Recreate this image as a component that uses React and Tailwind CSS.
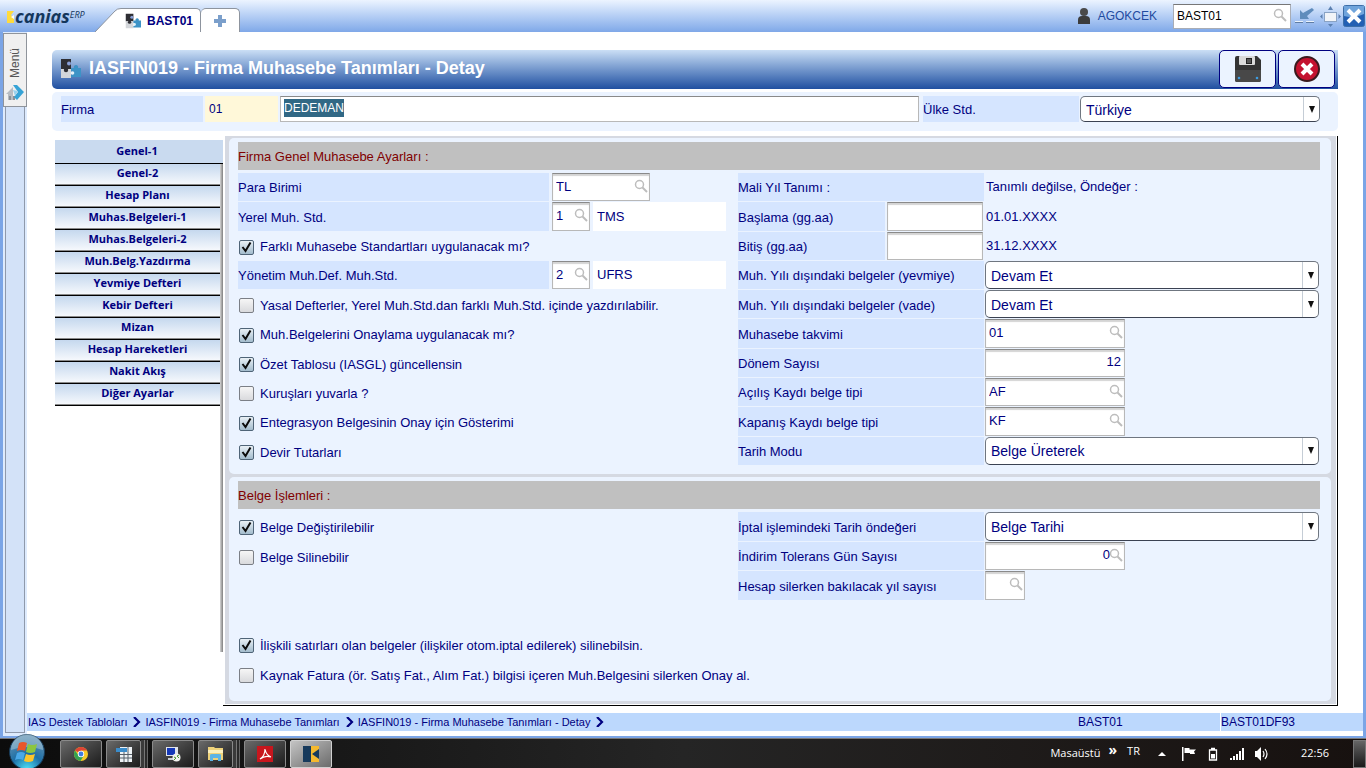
import React, { useEffect, useRef } from "react";

const tabs = [
  "Genel-1",
  "Genel-2",
  "Hesap Planı",
  "Muhas.Belgeleri-1",
  "Muhas.Belgeleri-2",
  "Muh.Belg.Yazdırma",
  "Yevmiye Defteri",
  "Kebir Defteri",
  "Mizan",
  "Hesap Hareketleri",
  "Nakit Akış",
  "Diğer Ayarlar",
];

const crumbs = [
  "IAS Destek Tabloları",
  "IASFIN019 - Firma Muhasebe Tanımları",
  "IASFIN019 - Firma Muhasebe Tanımları - Detay",
];

function SearchIcon() {
  return (
    <svg viewBox="0 0 14 14" className="h-3.5 w-3.5" fill="none" stroke="#bdbdbd">
      <circle cx="5.5" cy="5.5" r="4" strokeWidth="1.5" />
      <path d="M8.5 8.5 L13 13" strokeWidth="2" />
    </svg>
  );
}

function PuzzleIcon({ className }) {
  return (
    <svg viewBox="0 0 21 21" className={className}>
      <path d="M1 1h10v10H1z" fill="#2e2e33" />
      <path d="M1 11h10v9H1z" fill="#d3d6da" />
      <circle cx="9" cy="5.500" r="2" fill="#8aa0d8" />
      <circle cx="6" cy="12" r="2.200" fill="#2e2e33" />
      <path d="M11 10h3a2.200 2.200 0 1 1 4 0h3v9H11v-2a2 2 0 1 0 0-4z" fill="#3d93c6" />
      <circle cx="12.500" cy="15" r="1.800" fill="#e2f1f9" />
    </svg>
  );
}

function Label({ children, htmlFor, className = "" }) {
  return (
    <label
      htmlFor={htmlFor}
      className={`flex items-center self-stretch bg-[#d5e5ff] pt-0.5 ${className}`}
    >
      {children}
    </label>
  );
}

function Field({ id, name, value = "", search, right, className = "" }) {
  return (
    <div className={`relative self-stretch ${className}`}>
      <input
        id={id}
        aria-label={name}
        defaultValue={value}
        className={`h-full w-full border border-[#b8b8b8] border-t-[#8a8a8a] bg-white px-[3px] pb-0.5 text-[13px] text-[#000080] shadow-[inset_0_2px_1px_#d4d4d4] outline-none ${
          right ? "text-right" : ""
        } ${right && search ? "pr-3.5" : ""}`}
      />
      {search && (
        <button aria-label="Ara" className="absolute top-1.5 right-0.5">
          <SearchIcon />
        </button>
      )}
    </div>
  );
}

function Select({ id, value, className = "" }) {
  return (
    <div className={`relative self-stretch ${className}`}>
      <select
        id={id}
        className="h-full w-full appearance-none rounded-[5px] border border-[#6f7680] border-b-[#3b4252] bg-white px-[5px] pt-0.5 text-[14px] text-[#000080] outline-none"
      >
        <option>{value}</option>
      </select>
      <span className="pointer-events-none absolute inset-y-px right-px flex w-4 items-center justify-center border-l border-[#c5cdd6]">
        <svg viewBox="0 0 6 7" className="h-[7px] w-1.5">
          <path d="M0 0h6L3 7z" fill="#111" />
        </svg>
      </span>
    </div>
  );
}

function Check({ children, checked }) {
  return (
    <label className="flex items-center gap-[5px] pt-[3px] pl-px">
      <span className="relative h-[15px] w-[15px]">
        <input
          type="checkbox"
          defaultChecked={checked}
          className="peer block h-[15px] w-[15px] appearance-none rounded-[2px] border border-[#7b7f86] bg-linear-to-b from-[#f6f6f6] to-[#d9dadd] checked:border-[#4f6477] checked:from-[#e9f0f5] checked:to-[#a3bccd]"
        />
        <svg
          viewBox="0 0 15 15"
          className="pointer-events-none absolute inset-0 hidden peer-checked:block"
        >
          <path d="M3.5 7 L6.5 11 L11.5 2.5" fill="none" stroke="#0b0b0b" strokeWidth="2" />
        </svg>
      </span>
      <span className="pl-px">{children}</span>
    </label>
  );
}

function Section({ title, children, className }) {
  return (
    <section
      className={`flex flex-col rounded-[5px] bg-[#ebf3ff] pt-1 pr-[11px] pl-[9px] ${className}`}
    >
      <h2 className="flex h-7 items-center bg-[#c0c0c0] pt-0.5 text-[#800000]">{title}</h2>
      {children}
    </section>
  );
}

function TopBar() {
  return (
    <header className="flex h-8 items-end bg-linear-to-b from-[#ecf4ff] to-[#7fa8e8]">
      <div className="flex h-8 w-[95px] items-start pt-1 pl-[7px]">
        <svg viewBox="0 0 7 12" className="mt-[7px] mr-px h-3 w-[7px]">
          <path d="M0 0h7L4 4l3 4v4H0z" fill="#ffdb3d" />
          <path d="M7 4v4L4 6z" fill="#fff" />
        </svg>
        <span className="font-['Open_Sans',sans-serif] text-[18px] leading-6 font-bold text-[#14365c] italic">
          canias
        </span>
        <span className="mt-1 font-['Open_Sans',sans-serif] text-[9px] text-[#14365c] italic">
          ERP
        </span>
      </div>
      <nav className="flex h-6 items-stretch">
        <svg viewBox="0 0 26 24" className="h-6 w-[26px]">
          <path d="M0 24 L20 3 Q22 .5 26 .5 V24z" fill="#fff" />
          <path d="M0 24 L20 3 Q22 .5 26 .5" fill="none" stroke="#8d949e" />
        </svg>
        <a
          href="#bast01"
          className="flex items-center gap-1.5 rounded-tr-[5px] border-t border-r border-[#8d949e] bg-white pr-[7px] pl-1 text-[12px] font-bold text-[#000080]"
        >
          <PuzzleIcon className="h-4 w-4" />
          BAST01
        </a>
        <button
          aria-label="Yeni sekme"
          className="flex w-[39px] items-center justify-center rounded-t-[5px] border-t border-r border-[#8d949e] bg-white"
        >
          <svg viewBox="0 0 12 12" className="h-3 w-3">
            <path d="M4 0h4v4h4v4H8v4H4V8H0V4h4z" fill="#7b9fcb" />
          </svg>
        </button>
      </nav>
      <div className="ml-auto flex h-8 items-center">
        <svg viewBox="0 0 14 16" className="mr-[7px] h-4 w-3.5">
          <circle cx="7" cy="4" r="4" fill="#4a4a4a" />
          <path d="M1 16v-4q0-4 4-4h4q4 0 4 4v4z" fill="#3c3c3c" />
        </svg>
        <span className="mr-4 text-[12px] text-[#1f4aa0]">AGOKCEK</span>
        <div className="relative mr-1 h-[25px] w-[118px]">
          <input
            aria-label="Uygulama"
            defaultValue="BAST01"
            className="h-full w-full border border-[#a9adb5] border-t-[#777] bg-white px-[3px] text-[12px] text-black outline-none"
          />
          <button aria-label="Ara" className="absolute top-1 right-1">
            <SearchIcon />
          </button>
        </div>
        <button aria-label="Küçült" className="mr-1.5">
          <svg viewBox="0 0 19 16" className="h-4 w-[19px]">
            <path d="M17 0 L19 2 L12 8 L14 11 H5V2l3 3z" fill="#5f8cbc" />
            <path d="M0 13.500h8M11 13.500h8" stroke="#e9f1fa" />
            <path d="M0 14.500h8M11 14.500h8" stroke="#5f7da5" />
          </svg>
        </button>
        <button aria-label="Tam ekran" className="mr-0.5">
          <svg viewBox="0 0 21 21" className="h-[21px] w-[21px]">
            <rect x="4.500" y="6.500" width="12" height="9" fill="#f1f4f8" stroke="#8aa3c4" />
            <path
              d="M8 4h5l-2.500-4zM8 18h5l-2.500 3zM2.500 8v5L0 10.500zM18.500 8v5l2.500-2.500z"
              fill="#5c80b0"
            />
          </svg>
        </button>
        <button aria-label="Kapat" className="mr-px">
          <svg viewBox="0 0 22 22" className="h-[22px] w-[22px]">
            <rect x=".5" y=".5" width="21" height="21" rx="2" fill="#2360b4" stroke="#3c6ea8" />
            <path d="M1 1h20v8q-10 5-20 2z" fill="#6fa4dc" />
            <path d="M5 5l12 12M17 5L5 17" stroke="#fff" strokeWidth="4" />
          </svg>
        </button>
      </div>
    </header>
  );
}

function MenuRail() {
  return (
    <aside className="flex w-6 shrink-0 flex-col bg-[#deebfd] pb-[3px]">
      <button className="mt-px flex h-[74px] flex-col items-center justify-between border border-[#8f949b] bg-[#f0f0f0] pt-3.5 pb-1 text-[12px] text-[#555]">
        <span className="rotate-180 leading-4 [writing-mode:vertical-rl]">Menü</span>
        <svg viewBox="0 0 18 17" className="h-[17px] w-[18px]">
          <path d="M0 9 L7 2v13H2V9z" fill="#b7bcc2" />
          <path d="M3 11h2v4H3zM7 11h2v4H7z" fill="#8b9097" />
          <path d="M7 0l4 0 7 7-7 8-3-3 4-5z" fill="#36a3d6" />
          <path d="M7 5l5 1-3 5z" fill="#9ad2ee" />
        </svg>
      </button>
      <div className="mr-0.5 ml-0.5 flex-1 border border-t-0 border-[#8f99ab] bg-[#d3e2f8]" />
    </aside>
  );
}

function TitleBar() {
  return (
    <div className="flex h-[39px] items-start rounded-l-[5px] bg-linear-to-b from-[#cbdff5] to-[#1f4fa0] pr-[3px]">
      <PuzzleIcon className="mt-2 ml-2 h-[21px] w-[21px]" />
      <h1 className="mt-1 ml-2 text-[18px] leading-7 font-bold text-white">
        IASFIN019 - Firma Muhasebe Tanımları - Detay
      </h1>
      <div className="ml-auto flex gap-0.5">
        <button
          aria-label="Kaydet"
          className="flex h-[38px] w-[57px] items-center justify-center rounded-[5px] border border-[#000080] bg-[#ebf3ff]"
        >
          <svg viewBox="0 0 26 26" className="h-[26px] w-[26px]">
            <path d="M2 0h20l4 4v20q0 2-2 2H2q-2 0-2-2V2q0-2 2-2z" fill="#333" />
            <path d="M0 14h26v10q0 2-2 2H2q-2 0-2-2z" fill="#484848" />
            <rect x="4" y="0" width="16" height="9" rx="1" fill="#d9d9d9" />
            <rect x="11.500" y="2.500" width="5" height="5" fill="#555" stroke="#222" />
            <circle cx="4" cy="22" r="1.300" fill="#3d9be0" />
            <circle cx="22" cy="22" r="1.300" fill="#3d9be0" />
          </svg>
        </button>
        <button
          aria-label="Vazgeç"
          className="flex h-[38px] w-[57px] items-center justify-center rounded-[5px] border border-[#000080] bg-[#ebf3ff]"
        >
          <svg viewBox="0 0 26 26" className="h-[26px] w-[26px]">
            <circle cx="13" cy="13" r="12" fill="#c4122f" stroke="#3a1a1e" strokeWidth="2" />
            <path d="M8 8l10 10M18 8L8 18" stroke="#fff" strokeWidth="4" />
          </svg>
        </button>
      </div>
    </div>
  );
}

function CompanyBar() {
  const nameRef = useRef(null);
  useEffect(() => {
    nameRef.current.focus();
    nameRef.current.select();
  }, []);
  return (
    <div className="mt-[3px] flex h-[39px] rounded-[5px] bg-[#ebf3ff] pt-1 pr-[18px] pb-[9px] pl-[9px]">
      <Label htmlFor="company" className="mr-0.5 w-[142px]">
        Firma
      </Label>
      <input
        id="company"
        defaultValue="01"
        className="mr-0.5 w-[73px] bg-[#fff8d9] px-1 text-[12px] text-[#000080] outline-none"
      />
      <input
        ref={nameRef}
        aria-label="Firma adı"
        defaultValue="DEDEMAN"
        className="mr-1 min-w-0 flex-1 border border-[#b8b8b8] border-t-[#8a8a8a] bg-white px-[3px] pb-0.5 text-[12px] text-[#000080] outline-none selection:bg-[#316885] selection:text-white"
      />
      <Label htmlFor="country" className="mr-px w-[156px]">
        Ülke Std.
      </Label>
      <Select id="country" value="Türkiye" className="w-60" />
    </div>
  );
}

function SideTabs() {
  return (
    <nav className="mt-1 ml-[3px] flex w-[168px] shrink-0 flex-col font-['Open_Sans',sans-serif] text-[11px] font-bold text-[#000080]">
      <button className="h-6 border-b border-black bg-[#c9daef] pr-1">{tabs[0]}</button>
      <div className="mb-[54px] flex flex-1">
        <div className="flex flex-1 flex-col">
          {tabs.slice(1).map((tab) => (
            <button
              key={tab}
              className="h-[22px] border-b border-black bg-linear-to-b from-[#c5d8ee] to-[#f8fafd] pb-0.5 shadow-[inset_0_-1px_0_#8a8a8a]"
            >
              {tab}
            </button>
          ))}
        </div>
        <div className="w-[3px] bg-linear-to-r from-[#d6d6d6] to-[#808080]" />
      </div>
    </nav>
  );
}

function GeneralSection() {
  return (
    <Section title="Firma Genel Muhasebe Ayarları :" className="h-[336px]">
      <div className="mt-[3px] mb-[9px] flex flex-1">
        <div className="grid w-[500px] shrink-0 grid-rows-10 gap-px">
          <div className="flex items-center">
            <Label htmlFor="currency" className="mr-[3px] w-[311px]">
              Para Birimi
            </Label>
            <Field id="currency" value="TL" search className="w-[98px]" />
          </div>
          <div className="flex items-center">
            <Label htmlFor="localStd" className="mr-[3px] w-[311px]">
              Yerel Muh. Std.
            </Label>
            <Field id="localStd" value="1" search className="mr-[3px] w-[38px]" />
            <span className="flex w-[133px] items-center self-stretch bg-white px-1">TMS</span>
          </div>
          <Check checked>Farklı Muhasebe Standartları uygulanacak mı?</Check>
          <div className="flex items-center">
            <Label htmlFor="mgmtStd" className="mr-[3px] w-[311px]">
              Yönetim Muh.Def. Muh.Std.
            </Label>
            <Field id="mgmtStd" value="2" search className="mr-[3px] w-[38px]" />
            <span className="flex w-[133px] items-center self-stretch bg-white px-1">UFRS</span>
          </div>
          <Check>Yasal Defterler, Yerel Muh.Std.dan farklı Muh.Std. içinde yazdırılabilir.</Check>
          <Check checked>Muh.Belgelerini Onaylama uygulanacak mı?</Check>
          <Check checked>Özet Tablosu (IASGL) güncellensin</Check>
          <Check>Kuruşları yuvarla ?</Check>
          <Check checked>Entegrasyon Belgesinin Onay için Gösterimi</Check>
          <Check checked>Devir Tutarları</Check>
        </div>
        <div className="grid flex-1 grid-rows-10 gap-px">
          <div className="flex items-center">
            <Label className="mr-0.5 w-[246px]">Mali Yıl Tanımı :</Label>
            <span>Tanımlı değilse, Öndeğer :</span>
          </div>
          <div className="flex items-center">
            <Label htmlFor="start" className="mr-0.5 w-[147px]">
              Başlama (gg.aa)
            </Label>
            <Field id="start" className="mr-[3px] w-24" />
            <span>01.01.XXXX</span>
          </div>
          <div className="flex items-center">
            <Label htmlFor="end" className="mr-0.5 w-[147px]">
              Bitiş (gg.aa)
            </Label>
            <Field id="end" className="mr-[3px] w-24" />
            <span>31.12.XXXX</span>
          </div>
          <div className="flex items-center">
            <Label htmlFor="outJournal" className="mr-px w-[246px]">
              Muh. Yılı dışındaki belgeler (yevmiye)
            </Label>
            <Select id="outJournal" value="Devam Et" className="mr-px flex-1" />
          </div>
          <div className="flex items-center">
            <Label htmlFor="outDue" className="mr-px w-[246px]">
              Muh. Yılı dışındaki belgeler (vade)
            </Label>
            <Select id="outDue" value="Devam Et" className="mr-px flex-1" />
          </div>
          <div className="flex items-center">
            <Label htmlFor="calendar" className="mr-px w-[246px]">
              Muhasebe takvimi
            </Label>
            <Field id="calendar" value="01" search className="w-[140px]" />
          </div>
          <div className="flex items-center">
            <Label htmlFor="periods" className="mr-px w-[246px]">
              Dönem Sayısı
            </Label>
            <Field id="periods" value="12" right className="w-[140px]" />
          </div>
          <div className="flex items-center">
            <Label htmlFor="opening" className="mr-px w-[246px]">
              Açılış Kaydı belge tipi
            </Label>
            <Field id="opening" value="AF" search className="w-[140px]" />
          </div>
          <div className="flex items-center">
            <Label htmlFor="closing" className="mr-px w-[246px]">
              Kapanış Kaydı belge tipi
            </Label>
            <Field id="closing" value="KF" search className="w-[140px]" />
          </div>
          <div className="flex items-center">
            <Label htmlFor="dateMode" className="mr-px w-[246px]">
              Tarih Modu
            </Label>
            <Select id="dateMode" value="Belge Üreterek" className="mr-px flex-1" />
          </div>
        </div>
      </div>
    </Section>
  );
}

function DocumentSection() {
  return (
    <Section title="Belge İşlemleri :" className="flex-1">
      <div className="mt-[3px] mb-[13px] flex flex-1">
        <div className="grid w-[500px] shrink-0 grid-rows-6 gap-px whitespace-nowrap">
          <Check checked>Belge Değiştirilebilir</Check>
          <Check>Belge Silinebilir</Check>
          <div className="row-span-2" />
          <Check checked>
            İlişkili satırları olan belgeler (ilişkiler otom.iptal edilerek) silinebilsin.
          </Check>
          <Check>
            Kaynak Fatura (ör. Satış Fat., Alım Fat.) bilgisi içeren Muh.Belgesini silerken Onay
            al.
          </Check>
        </div>
        <div className="grid flex-1 grid-rows-6 gap-px">
          <div className="flex items-center">
            <Label htmlFor="cancelDate" className="mr-px w-[246px]">
              İptal işlemindeki Tarih öndeğeri
            </Label>
            <Select id="cancelDate" value="Belge Tarihi" className="mr-px flex-1" />
          </div>
          <div className="flex items-center">
            <Label htmlFor="tolerance" className="mr-px w-[246px]">
              İndirim Tolerans Gün Sayısı
            </Label>
            <Field id="tolerance" value="0" right search className="w-[140px]" />
          </div>
          <div className="flex items-center">
            <Label htmlFor="years" className="mr-px w-[246px]">
              Hesap silerken bakılacak yıl sayısı
            </Label>
            <Field id="years" search className="w-10" />
          </div>
        </div>
      </div>
    </Section>
  );
}

function StatusBar() {
  return (
    <footer className="mb-[5px] flex h-[18px] items-center bg-[#bcd8fd] text-[11px] text-[#000080]">
      <nav className="flex flex-1 items-center pl-px">
        {crumbs.map((crumb) => (
          <React.Fragment key={crumb}>
            <a href="#yol">{crumb}</a>
            <svg viewBox="0 0 8 10" className="mr-1 ml-1.5 h-2.5 w-2">
              <path d="M1 0l5 5-5 5" fill="none" stroke="#000080" strokeWidth="2.200" />
            </svg>
          </React.Fragment>
        ))}
      </nav>
      <span className="w-[142px] text-[12px]">BAST01</span>
      <span className="w-[143px] border-l border-white text-[12px]">BAST01DF93</span>
    </footer>
  );
}

function TaskButton({ label, stacked, active, children }) {
  return (
    <div className="flex">
      <button
        aria-label={label}
        className={`flex h-7 items-center justify-center rounded-[2px] border bg-linear-to-br ${
          stacked ? "w-[35px]" : "w-[42px]"
        } ${
          active
            ? "border-[#d0d0d0] from-[#c4c4c4] to-[#6c6c6c]"
            : "border-[#8a8a8a] from-[#6a6a6a] to-[#1c1c1c]"
        }`}
      >
        {children}
      </button>
      {stacked && (
        <>
          <span className="w-1 border-r border-[#777] bg-[#3a3a3a]" />
          <span className="w-[3px] border-r border-[#666] bg-[#2a2a2a]" />
        </>
      )}
    </div>
  );
}

function Taskbar() {
  return (
    <div className="flex h-[30px] items-center border-t border-[#777] bg-linear-to-r from-[#0c0c0c] via-[#252525] to-[#17110f] font-['Open_Sans',sans-serif] text-[11px] text-white">
      <button aria-label="Başlat" className="relative -top-0.5 mr-[14px] ml-2 h-[38px] w-[38px]">
        <svg viewBox="0 0 38 38" className="h-[38px] w-[38px]">
          <defs>
            <radialGradient id="orb" cx=".5" cy="1" r="1">
              <stop offset="0" stopColor="#4fe3f8" />
              <stop offset=".45" stopColor="#1d6fa6" />
              <stop offset="1" stopColor="#6f97b4" />
            </radialGradient>
          </defs>
          <circle cx="19" cy="19" r="17.500" fill="url(#orb)" stroke="#173a58" />
          <path d="M3 17a16 16 0 0 1 32 0q-16-6-32 0z" fill="#b9d2e0" opacity=".45" />
          <path d="M11 10q4-2 8 0l-2 8q-4-2-8 0z" fill="#e8562a" />
          <path d="M20 11q4 2 9 0l-2 8q-5 2-9 0z" fill="#8cc63f" />
          <path d="M9 20q4-2 8 0l-2 7q-4-2-8 0z" fill="#4aa8e8" />
          <path d="M18 21q4 2 9 0l-2 7q-5 2-9 0z" fill="#fcc52c" />
        </svg>
      </button>
      <div className="flex gap-1">
        <TaskButton label="Chrome">
          <svg viewBox="0 0 14 14" className="h-3.5 w-3.5">
            <circle cx="7" cy="7" r="7" fill="#f7c927" />
            <path d="M7 7 L1 3.500A7 7 0 0 1 13.100 3.600H7z" fill="#dd4436" />
            <path d="M1 3.500A7 7 0 0 0 6.500 14L9.500 9 5 9z" fill="#33a150" />
            <circle cx="7" cy="7" r="3.200" fill="#fff" />
            <circle cx="7" cy="7" r="2.400" fill="#3f7de0" />
          </svg>
        </TaskButton>
        <TaskButton label="Hesap makinesi" stacked>
          <svg viewBox="0 0 16 16" className="h-4 w-4">
            <path d="M4 1h12v15H4z" fill="#eef2f5" />
            <path d="M4 8.500h12M4 12h12M8 5v11M12 1v15" stroke="#57606a" />
            <path d="M0 2h11v4H0z" fill="#3a8ccb" />
          </svg>
        </TaskButton>
        <TaskButton label="Uzak masaüstü">
          <svg viewBox="0 0 16 16" className="h-4 w-4">
            <path d="M1 1h12v9H1z" fill="#e0e4ea" />
            <path d="M2 2h8v7H2z" fill="#1538b8" />
            <path d="M3 12h7v2H3z" fill="#c9ced6" />
            <circle cx="11.500" cy="11.500" r="4" fill="#f2f2ee" />
            <path d="M9 11l2 1-2 2M14 9l-2 1 2 2" fill="none" stroke="#4c9a35" />
          </svg>
        </TaskButton>
        <TaskButton label="Gezgin" stacked>
          <svg viewBox="0 0 17 15" className="h-[15px] w-[17px]">
            <path d="M1 1h6l1 1h8v12H1z" fill="#eed27a" />
            <path d="M1 4h15v3H1z" fill="#fbf0bd" />
            <path d="M3 15V9q0-1 2-1h7q2 0 2 1v6h-3v-3H6v3z" fill="#5cb4e5" />
          </svg>
        </TaskButton>
        <TaskButton label="Adobe Reader">
          <svg viewBox="0 0 16 16" className="h-4 w-4">
            <rect width="16" height="16" fill="#c8161d" />
            <path
              d="M3 13q5-3 5-10 1 6 6 8-6-2-11 2z"
              fill="none"
              stroke="#fff"
              strokeWidth="1.200"
            />
          </svg>
        </TaskButton>
        <TaskButton label="Canias" active>
          <svg viewBox="0 0 16 16" className="h-4 w-4">
            <path d="M0 0h8v16H0z" fill="#173a5c" />
            <path d="M8 0h8v16H8z" fill="#f5b92f" />
            <path d="M16 3v10L9 8z" fill="#173a5c" />
          </svg>
        </TaskButton>
      </div>
      <div className="ml-auto flex h-full items-center">
        <span className="mr-2">Masaüstü</span>
        <span className="mr-2.5 mb-2 text-[14px] leading-3 font-bold">»</span>
        <span className="mr-[18px] mb-1">TR</span>
        <svg viewBox="0 0 8 4" className="mr-4 h-1 w-2">
          <path d="M4 0l4 4H0z" fill="#fff" />
        </svg>
        <svg viewBox="0 0 14 14" className="mr-3 h-3.5 w-3.5">
          <path d="M0 0h1.500v14H0z" fill="#fff" />
          <path d="M2.500 1h5v1.500H14l-2 2 1 2.500H8V6H2.500z" fill="#fff" />
        </svg>
        <svg viewBox="0 0 10 14" className="mr-3 h-3.5 w-2.5" fill="none" stroke="#fff">
          <path d="M3 1.500h4M1.500 3h7v10h-7z" strokeWidth="1.300" />
          <path d="M3 7h4v4.500H3z" fill="#fff" stroke="none" />
        </svg>
        <svg viewBox="0 0 15 12" className="mr-2.5 h-3 w-[15px]">
          <path d="M0 10h2v2H0zM3 8h2v4H3zM6 6h2v6H6zM9 3h2v9H9zM12 0h2v12h-2z" fill="#fff" />
        </svg>
        <svg viewBox="0 0 14 14" className="mr-8 h-3.5 w-3.5" fill="none" stroke="#fff">
          <path d="M0 4h2l4-4v14l-4-4H0z" fill="#fff" stroke="none" />
          <path d="M8 4q2 3 0 6M10 2q4 5 0 10" strokeWidth="1.200" />
        </svg>
        <span className="mr-6">22:56</span>
        <button
          aria-label="Masaüstünü göster"
          className="h-7 w-[13px] border border-[#777] bg-linear-to-b from-[#666] to-[#1a1a1a]"
        />
      </div>
    </div>
  );
}

function App() {
  return (
    <div className="flex min-h-screen flex-col bg-white font-['Liberation_Sans',Arial,sans-serif] text-[13px] text-[#000080]">
      <TopBar />
      <div className="flex flex-1 border-r-3 border-b-2 border-l-3 border-[#7ba5e6]">
        <MenuRail />
        <div className="flex min-w-0 flex-1 flex-col">
          <main className="flex flex-1 flex-col px-[25px] pt-[18px] pb-[7px]">
            <TitleBar />
            <CompanyBar />
            <div className="mt-[5px] flex flex-1">
              <SideTabs />
              <div className="flex flex-1 border-r border-b border-black">
                <div className="mr-px mb-px ml-0.5 flex flex-1 flex-col gap-[3px] bg-[#d5d9e2] pt-0.5 pr-[5px] pb-[3px] pl-1">
                  <GeneralSection />
                  <DocumentSection />
                </div>
              </div>
            </div>
          </main>
          <StatusBar />
        </div>
      </div>
      <Taskbar />
    </div>
  );
}

export default App;
